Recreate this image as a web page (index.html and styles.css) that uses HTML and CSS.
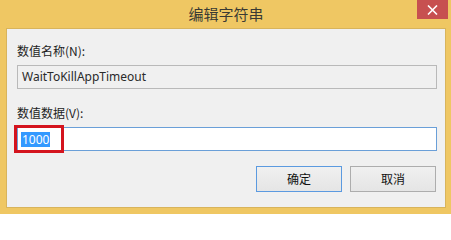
FILE: index.html
```html
<!DOCTYPE html>
<html lang="zh-CN">
<head>
<meta charset="utf-8">
<title>编辑字符串</title>
<link rel="stylesheet" href="styles.css">
</head>
<body>
<div class="window">
  <div class="titlebar">
    <div class="title">编辑字符串</div>
    <div class="close">
      <svg width="11" height="10" viewBox="0 0 11 10"><path d="M1 0.5 L10 9.5 M10 0.5 L1 9.5" stroke="#fff" stroke-width="1.6" fill="none"/></svg>
    </div>
  </div>
  <div class="client">
    <div class="label">数值名称(N):</div>
    <div class="field readonly">WaitToKillAppTimeout</div>
    <div class="label second">数值数据(V):</div>
    <div class="field-wrap">
      <div class="field focused"><span class="sel">1000</span></div>
      <div class="mark"></div>
    </div>
    <div class="buttons">
      <div class="btn default">确定</div>
      <div class="btn">取消</div>
    </div>
  </div>
</div>
</body>
</html>
```
FILE: styles.css
```css
html, body {
  margin: 0;
  padding: 0;
  width: 451px;
  height: 214px;
  overflow: hidden;
}
body {
  font-family: "Noto Sans CJK SC", "Noto Sans", sans-serif;
  font-size: 12px;
  color: #222;
}
.window {
  width: 451px;
  height: 214px;
  box-sizing: border-box;
  background: #efc763;
  padding: 0 5px 6px 6px;
  display: flex;
  flex-direction: column;
}
.titlebar {
  height: 28px;
  flex: none;
  display: grid;
  grid-template-columns: 1fr auto 1fr;
  margin-left: -6px;
  margin-right: -5px;
}
.title {
  grid-column: 2;
  font-size: 15px;
  line-height: 28px;
  color: #3a3a34;
  padding-left: 1px;
}
.close {
  grid-column: 3;
  justify-self: end;
  align-self: start;
  width: 31px;
  height: 19px;
  margin-right: 3px;
  background: #c75050;
  display: flex;
  align-items: center;
  justify-content: center;
}
.close svg { display: block; }
.client {
  flex: 1;
  background: #f0f0f0;
  border: 1px solid #d8b45c;
  box-sizing: border-box;
  padding: 14px 8px 0 10px;
  display: flex;
  flex-direction: column;
}
.label {
  line-height: 16px;
  height: 16px;
  color: #1e1e1e;
}
.label.second {
  margin-top: 16px;
}
.field {
  margin-top: 6px;
  height: 24px;
  box-sizing: border-box;
  border: 1px solid #b9b9b9;
  padding-left: 4px;
  font-family: "Noto Sans", "Noto Sans CJK SC", sans-serif;
  font-size: 12px;
  line-height: 22px;
  color: #2a2a2a;
}
.field.readonly {
  background: #f0f0f0;
}
.field-wrap {
  position: relative;
  margin-top: 6px;
}
.field-wrap .field {
  margin-top: 0;
}
.field.focused {
  background: #fff;
  border-color: #6a9fd8;
  padding-left: 3px;
  display: flex;
  align-items: center;
}
.sel {
  background: #3399ff;
  color: #fff;
  line-height: 15px;
  height: 15px;
  padding: 0 1px;
}
.mark {
  position: absolute;
  left: -3px;
  top: -2px;
  width: 50px;
  height: 28px;
  box-sizing: border-box;
  border: 3px solid #d4141e;
}
.buttons {
  margin-top: 15px;
  display: flex;
  justify-content: flex-end;
  gap: 8px;
  padding-right: 1px;
}
.btn {
  width: 86px;
  height: 26px;
  box-sizing: border-box;
  border: 1px solid #adadad;
  background: linear-gradient(#f0f0f0, #e5e5e5);
  text-align: center;
  line-height: 24px;
  color: #111;
}
.btn.default {
  border-color: #5b9ae0;
}
```
